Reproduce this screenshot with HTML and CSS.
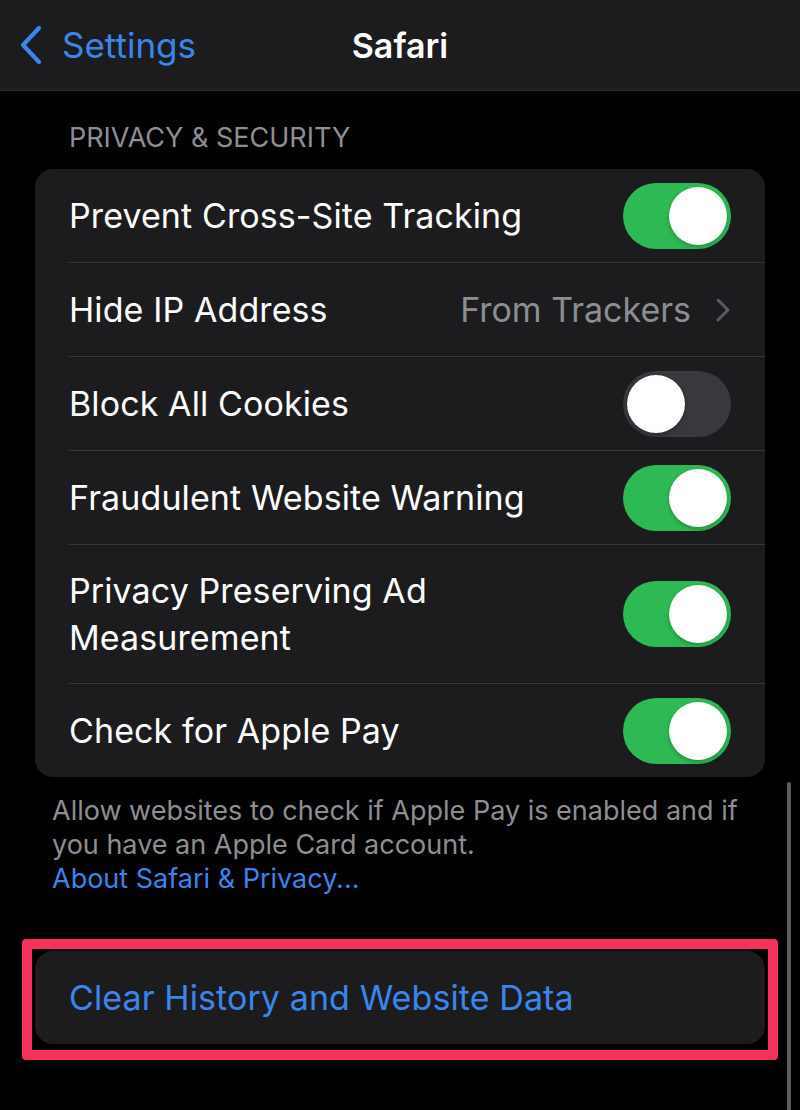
FILE: index.html
```html
<!DOCTYPE html>
<html lang="en">
<head>
<meta charset="utf-8">
<title>Safari</title>
<link rel="stylesheet" href="styles.css">
</head>
<body>
<header class="navbar">
  <a class="back">
    <svg class="back-icon" width="24" height="40" viewBox="0 0 24 40"><path d="M20 3 L4 20 L20 37" fill="none" stroke="currentColor" stroke-width="4.2" stroke-linecap="round" stroke-linejoin="round"/></svg>
    <span>Settings</span>
  </a>
  <h1 class="title">Safari</h1>
  <span></span>
</header>

<main class="content">
  <h2 class="section-header">PRIVACY &amp; SECURITY</h2>
  <div class="card">
    <div class="row">
      <span class="label">Prevent Cross-Site Tracking</span>
      <span class="toggle on"><span class="knob"></span></span>
    </div>
    <div class="row">
      <span class="label">Hide IP Address</span>
      <span class="detail">From Trackers
        <svg class="chevron" width="16" height="26" viewBox="0 0 16 26"><path d="M3 3 L13 13 L3 23" fill="none" stroke="currentColor" stroke-width="3" stroke-linecap="round" stroke-linejoin="round"/></svg>
      </span>
    </div>
    <div class="row">
      <span class="label">Block All Cookies</span>
      <span class="toggle"><span class="knob"></span></span>
    </div>
    <div class="row">
      <span class="label">Fraudulent Website Warning</span>
      <span class="toggle on"><span class="knob"></span></span>
    </div>
    <div class="row tall">
      <span class="label">Privacy Preserving Ad<br>Measurement</span>
      <span class="toggle on"><span class="knob"></span></span>
    </div>
    <div class="row">
      <span class="label">Check for Apple Pay</span>
      <span class="toggle on"><span class="knob"></span></span>
    </div>
  </div>
  <p class="footer">Allow websites to check if Apple Pay is enabled and if you have an Apple Card account.<br><a class="link">About Safari &amp; Privacy...</a></p>

  <div class="highlight">
    <div class="card action-card">
      <span class="action">Clear History and Website Data</span>
    </div>
  </div>
</main>
<div class="scrollbar"></div>
</body>
</html>
```

FILE: styles.css
```css
html, body {
  margin: 0;
  padding: 0;
  background: #000;
}
body {
  width: 800px;
  height: 1110px;
  overflow: hidden;
  position: relative;
  font-family: "Inter", "Noto Sans", sans-serif;
  color: #fff;
  -webkit-font-smoothing: antialiased;
}

.navbar {
  height: 91px;
  background: #1c1b1e;
  border-bottom: 1px solid #2a2a2d;
  display: grid;
  grid-template-columns: 1fr auto 1fr;
  align-items: center;
  box-sizing: border-box;
}
.back {
  display: flex;
  align-items: center;
  gap: 19px;
  padding-left: 19px;
  color: #3a86ec;
  font-size: 35px;
}
.back-icon { display: block; }
.title {
  margin: 0;
  font-size: 34px;
  font-weight: 600;
}

.content {
  padding: 0 35px;
}
.section-header {
  margin: 0;
  padding: 32px 0 16px 34px;
  font-size: 27px;
  font-weight: 400;
  color: #8e8e93;
  line-height: 30px;
}

.card {
  background: #1c1c1e;
  border-radius: 18px;
  overflow: hidden;
}
.row {
  margin-left: 34px;
  padding: 0 34px 0 0;
  min-height: 93px;
  display: flex;
  align-items: center;
  justify-content: space-between;
  border-top: 1px solid #38383a;
}
.row:first-child { border-top: none; min-height: 93px; }
.row.tall { padding-top: 22px; padding-bottom: 22px; }
.label {
  font-size: 34px;
  line-height: 47px;
  letter-spacing: 0.1px;
}
.detail {
  display: flex;
  align-items: center;
  gap: 24px;
  color: #8d8d92;
  font-size: 34px;
  line-height: 47px;
}
.chevron { color: #5b5b60; display: block; }

.toggle {
  width: 108px;
  height: 66px;
  border-radius: 33px;
  background: #39393d;
  display: flex;
  align-items: center;
  padding: 0 4px;
  box-sizing: border-box;
  flex-shrink: 0;
}
.toggle.on {
  background: #2fb954;
  justify-content: flex-end;
}
.knob {
  width: 58px;
  height: 58px;
  border-radius: 50%;
  background: #fff;
  box-shadow: 0 2px 4px rgba(0,0,0,0.25);
}

.footer {
  margin: 0;
  padding: 17px 18px 0 17px;
  color: #8e8e93;
  font-size: 27px;
  line-height: 34px;
}
.link { color: #3a86ec; }

.highlight {
  margin: 43px -13px 0 -13px;
  border: 10px solid #f5325b;
  border-radius: 4px;
  padding: 2px 3px 6px 3px;
}
.action-card {
  height: 93px;
  display: flex;
  align-items: center;
  padding-left: 34px;
}
.action {
  color: #3a86ec;
  font-size: 34px;
  letter-spacing: 0.1px;
}

.scrollbar {
  position: absolute;
  left: 787px;
  top: 782px;
  width: 4px;
  height: 340px;
  border-radius: 2px;
  background: #5d5d61;
}
```
